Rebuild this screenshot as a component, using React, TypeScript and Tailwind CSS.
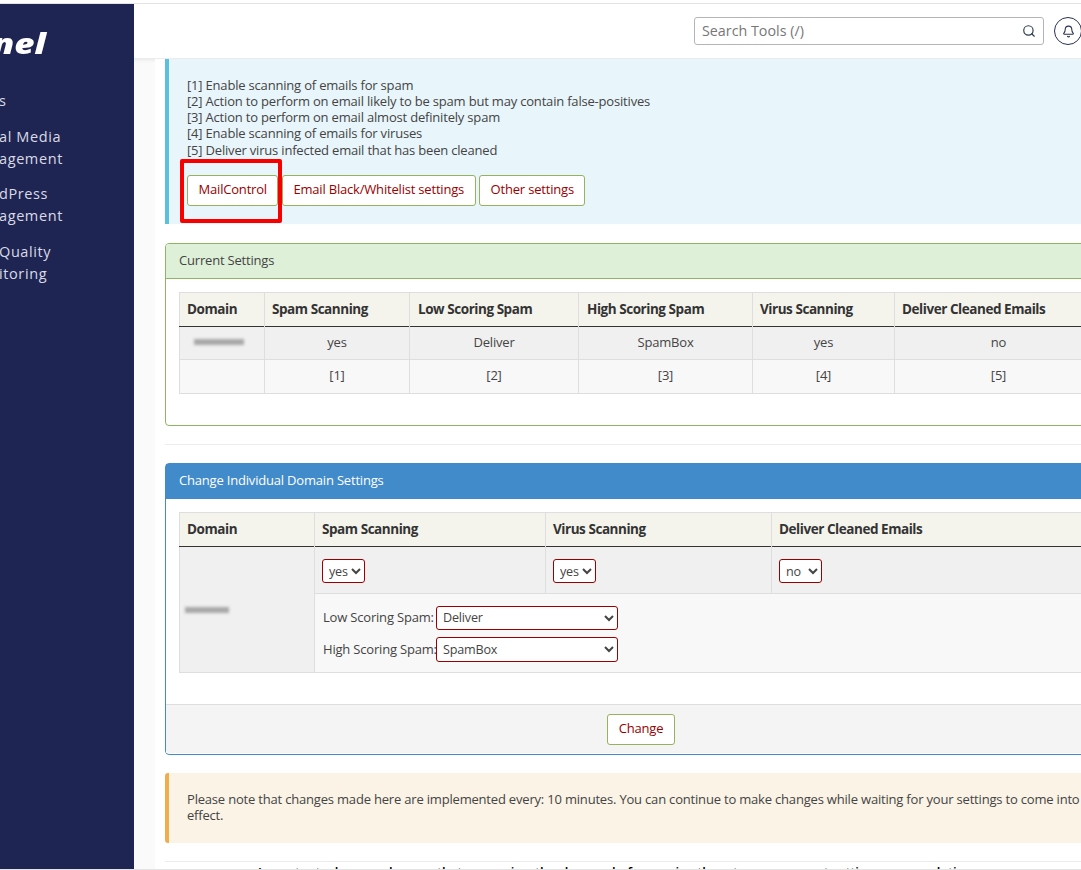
import type { ReactNode } from "react";
import { Bell, Search } from "lucide-react";

const legend = [
	"[1] Enable scanning of emails for spam",
	"[2] Action to perform on email likely to be spam but may contain false-positives",
	"[3] Action to perform on email almost definitely spam",
	"[4] Enable scanning of emails for viruses",
];

const th = "h-[34px] border-r border-[#dedede] pb-[2px] text-left text-[13.5px] font-bold tracking-[-0.45px] text-[#333]";
const td = "border-r border-[#dedede] text-center text-[13px] tracking-[-0.19px] text-[#444]";

function MailButton(props: Readonly<{ children: ReactNode }>): ReactNode {
	return (
		<button
			className="h-[31px] rounded-[3px] border border-[#97b15c] bg-white px-[10.5px] pb-[3px] text-[13px] tracking-[-0.19px] text-[#990000]"
			type="button"
		>
			{props.children}
		</button>
	);
}

function Dropdown(props: Readonly<{ className: string; value: string }>): ReactNode {
	return (
		<select
			className={`rounded-[3px] border border-[#990000] bg-white pl-[2px] text-[12.6px] text-[#444] ${props.className}`}
			defaultValue={props.value}
		>
			<option>{props.value}</option>
		</select>
	);
}

function Blur(props: Readonly<{ className: string }>): ReactNode {
	return <div className={`bg-[#a8a8a8] blur-[1.5px] ${props.className}`} />;
}

function Sidebar(): ReactNode {
	return (
		<aside className="h-[865px] w-[134px] shrink-0 overflow-hidden bg-[#1f2552] text-[14.5px] leading-[21.8px] tracking-[0.6px] text-[#d9dbe6]">
			<div className="mt-[24px] h-[30px] w-[46px] origin-right scale-x-[1.25] text-right text-[28px] leading-[30px] font-extrabold tracking-normal whitespace-nowrap text-white italic">
				nel
			</div>
			<div className="mt-[32px] -ml-[1px]">s</div>
			<div className="mt-[14px] -ml-[1px]">
				<div>al Media</div>
				<div>agement</div>
			</div>
			<div className="mt-[14px] -ml-[1px]">
				<div>dPress</div>
				<div>agement</div>
			</div>
			<div className="mt-[14px] -ml-[1px]">
				<div>Quality</div>
				<div>itoring</div>
			</div>
		</aside>
	);
}

export default function App(): ReactNode {
	return (
		<div className="h-[870px] w-[1081px] overflow-hidden bg-white font-['Open_Sans',sans-serif] text-[13px] leading-[16px] tracking-[-0.19px] text-[#444]">
			<div className="h-[4px] border-b border-[#e3e3e3]" />
			<div className="flex border-b border-[#e3e3e3]">
				<Sidebar />
				<div className="h-[865px] min-w-0 flex-1 overflow-hidden bg-[#fafafa]">
					<header className="flex h-[55px] items-center border-b border-[#ececec] bg-white pl-[560px] shadow-[0_1px_3px_rgba(0,0,0,0.08)]">
						<div className="flex h-[28px] w-[350px] shrink-0 items-center justify-between rounded-[3px] border border-[#b5b5b9] px-[7px] text-[14.3px] tracking-normal text-[#777]">
							<span>Search Tools (/)</span>
							<Search className="size-[14px] text-[#293a4a]" strokeWidth={2} />
						</div>
						<div className="ml-[10px] flex size-[28px] shrink-0 items-center justify-center rounded-full border border-[#293056] text-[#293056]">
							<Bell className="size-[13px]" strokeWidth={2} />
						</div>
					</header>
					<main className="ml-[21px] w-[1000px] bg-white pl-[10px]">
						<section className="relative h-[165px] border-l-[4px] border-[#5bc0de] bg-[#e8f5fb] pt-[18px] pl-[18px]">
							{legend.map((line) => (
								<div key={line}>{line}</div>
							))}
							<div className="mt-[1px]">[5] Deliver virus infected email that has been cleaned</div>
							<div className="mt-[17px] flex gap-[3.5px]">
								<MailButton>MailControl</MailButton>
								<MailButton>Email Black/Whitelist settings</MailButton>
								<MailButton>Other settings</MailButton>
							</div>
							{/* annotation drawn over the screenshot */}
							<div className="absolute top-[100px] left-[11px] h-[64px] w-[102px] rounded-[2px] border-[4px] border-[#f80000]" />
						</section>

						<section className="mt-[19px] h-[183px] rounded-[4px] border border-[#8fb561]">
							<div className="flex h-[35px] items-center rounded-t-[3px] border-b border-[#8fb561] bg-[#dff0d8] pb-[2px] pl-[13px]">Current Settings</div>
							<table className="mt-[13px] ml-[13px] w-[924px] table-fixed border-collapse border border-[#dedede]">
								<thead className="bg-[#f4f3ec]">
									<tr className="border-b border-[#333]">
										<th className={`${th} w-[85px] pl-[7px]`}>Domain</th>
										<th className={`${th} w-[145px] pl-[7px]`}>Spam Scanning</th>
										<th className={`${th} w-[169px] pl-[8px]`}>Low Scoring Spam</th>
										<th className={`${th} w-[174px] pl-[8px]`}>High Scoring Spam</th>
										<th className={`${th} w-[142px] pl-[7px]`}>Virus Scanning</th>
										<th className={`${th} pl-[7px]`}>Deliver Cleaned Emails</th>
									</tr>
								</thead>
								<tbody>
									<tr className="h-[33px] border-b border-[#dedede] bg-[#f0f0f0]">
										<td className={td}>
											<Blur className="-mt-[3px] ml-[14px] h-[6px] w-[50px]" />
										</td>
										<td className={`${td} pb-[2px]`}>yes</td>
										<td className={`${td} pb-[2px]`}>Deliver</td>
										<td className={`${td} pb-[2px]`}>SpamBox</td>
										<td className={`${td} pb-[2px]`}>yes</td>
										<td className={`${td} pb-[2px]`}>no</td>
									</tr>
									<tr className="h-[34px] bg-[#f8f8f8]">
										<td className={td} />
										<td className={`${td} pb-[4px]`}>[1]</td>
										<td className={`${td} pb-[4px]`}>[2]</td>
										<td className={`${td} pb-[4px]`}>[3]</td>
										<td className={`${td} pb-[4px]`}>[4]</td>
										<td className={`${td} pb-[4px]`}>[5]</td>
									</tr>
								</tbody>
							</table>
						</section>

						<div className="mt-[18px] border-t border-[#ececec]" />

						<section className="mt-[18px] h-[292px] rounded-[4px] border border-[#428bca]">
							<div className="flex h-[35px] items-center bg-[#428bca] pb-[4px] pl-[13px] text-white">Change Individual Domain Settings</div>
							<table className="mt-[13px] ml-[13px] w-[924px] table-fixed border-collapse border border-[#dedede]">
								<thead className="bg-[#f4f3ec]">
									<tr className="border-b border-[#333]">
										<th className={`${th} w-[135px] pl-[7px]`}>Domain</th>
										<th className={`${th} w-[231px] pl-[7px]`}>Spam Scanning</th>
										<th className={`${th} w-[226px] pl-[7px]`}>Virus Scanning</th>
										<th className={`${th} pl-[7px]`}>Deliver Cleaned Emails</th>
									</tr>
								</thead>
								<tbody>
									<tr className="h-[47px] border-b border-[#dedede] bg-[#f0f0f0]">
										<td className={`${td} bg-[#f0f0f0]`} rowSpan={2}>
											<Blur className="ml-[5px] h-[6px] w-[44px]" />
										</td>
										<td className={`${td} pt-[2px] pl-[7px] text-left`}>
											<Dropdown className="h-[24px] w-[43px]" value="yes" />
										</td>
										<td className={`${td} pt-[2px] pl-[7px] text-left`}>
											<Dropdown className="h-[24px] w-[43px]" value="yes" />
										</td>
										<td className={`${td} pt-[2px] pl-[7px] text-left`}>
											<Dropdown className="h-[24px] w-[43px]" value="no" />
										</td>
									</tr>
									<tr className="h-[79px] bg-[#f8f8f8]">
										<td className="pt-[1px] pl-[8px]" colSpan={3}>
											<div className="flex items-center">
												<span className="w-[113px] pb-[2px] whitespace-nowrap">Low Scoring Spam:</span>
												<Dropdown className="h-[24px] w-[182px]" value="Deliver" />
											</div>
											<div className="mt-[7px] flex items-center">
												<span className="w-[113px] whitespace-nowrap">High Scoring Spam:</span>
												<Dropdown className="h-[25px] w-[182px]" value="SpamBox" />
											</div>
										</td>
									</tr>
								</tbody>
							</table>
							<div className="mt-[31px] flex h-[49px] items-center justify-center border-t border-[#dedede] bg-[#f4f4f4]">
								<div className="-ml-[38px]">
									<MailButton>Change</MailButton>
								</div>
							</div>
						</section>

						<section className="mt-[18px] h-[70px] rounded-[3px] border-l-[4px] border-[#f0ad4e] bg-[#faf3e6] pt-[18px] pr-[60px] pl-[18px]">
							Please note that changes made here are implemented every: 10 minutes. You can continue to make changes while waiting for your settings to come into effect.
						</section>

						<div className="mt-[18px] border-t border-[#ececec]" />
						<div className="mt-[2px] ml-[93px] whitespace-nowrap leading-[16px] font-semibold text-black">
							Important: please make sure that you review the changes before saving them to your account settings page each time
						</div>
					</main>
				</div>
			</div>
		</div>
	);
}
